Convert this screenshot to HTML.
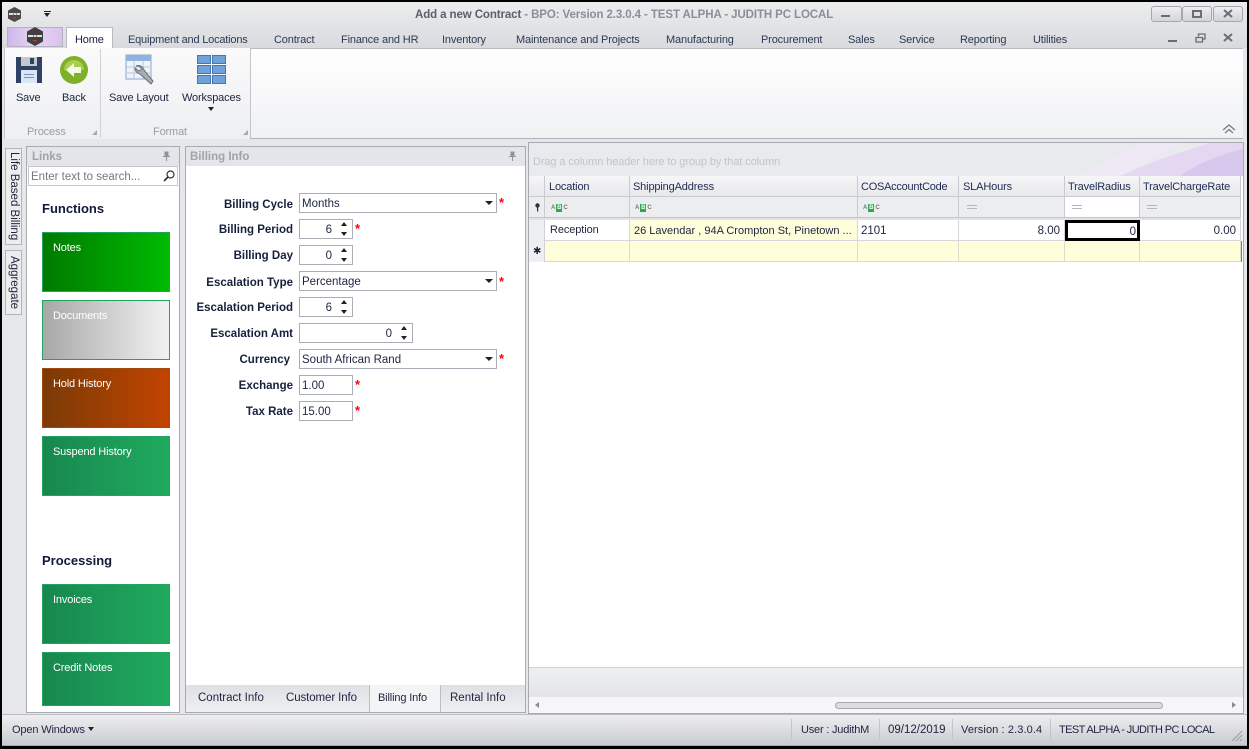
<!DOCTYPE html>
<html><head><meta charset="utf-8"><style>
html,body{margin:0;padding:0}
body{width:1249px;height:749px;overflow:hidden;position:relative;background:#e6e7ea;font-family:"Liberation Sans",sans-serif;font-size:11px;letter-spacing:-.15px;color:#1e2440}
.a,.t{position:absolute}
.t{white-space:nowrap;line-height:14px;margin-top:1px}
.tab{top:32px;color:#2b3a55}
.n{font-size:11.5px;letter-spacing:0}
.gb{position:absolute;left:42px;width:128px;height:60px;box-sizing:border-box;border:1px solid #23a35f;background:linear-gradient(90deg,#17874f,#1fab5e) border-box}
.gb span{position:absolute;left:10px;top:8px;color:#fff;line-height:14px}
.lb{position:absolute;left:186px;width:107px;margin-top:1px;text-align:right;font-weight:bold;font-size:11.5px;letter-spacing:0;color:#16203c;line-height:14px;white-space:nowrap}
.inp{position:absolute;left:299px;box-sizing:border-box;height:20px;border:1px solid #a9adb5;background:#fff;line-height:20px;padding-left:2px;color:#1e2440;font-size:11.5px;letter-spacing:0}
.req{position:absolute;color:#f00;font-weight:bold;font-size:13px;line-height:14px}
.up{position:absolute;width:0;height:0;border-left:3.5px solid transparent;border-right:3.5px solid transparent;border-bottom:4px solid #222}
.dn{position:absolute;width:0;height:0;border-left:3.5px solid transparent;border-right:3.5px solid transparent;border-top:4px solid #222}
.hc{position:absolute;top:176px;height:20px;box-sizing:border-box;border-right:1px solid #c9cbd0;background:linear-gradient(#f6f6f8,#e7e8eb);line-height:23px;padding-left:3px;color:#1e2a50}
.fc{position:absolute;top:197px;height:20px;box-sizing:border-box;border-right:1px solid #c9cbd0;background:#ecedef}
.dc{position:absolute;top:220px;height:21px;box-sizing:border-box;border-right:1px solid #d6d7da;border-bottom:1px solid #d6d7da;background:#fff;line-height:23px;padding:0 3px;white-space:nowrap;overflow:hidden;font-size:11.5px;letter-spacing:0}
.nc{position:absolute;top:241px;height:21px;box-sizing:border-box;border-right:1px solid #dcdcc8;border-bottom:1px solid #d6d7da;background:#fefeda}
.abc{position:absolute;top:204px;width:18px;height:8px;font-size:6px;line-height:8px;color:#777;letter-spacing:0;font-weight:bold;white-space:nowrap}
.abc b{display:inline-block;width:6px;margin:0 1px;text-align:center;background:#2fa84f;color:#fff}
.eq{position:absolute;top:205px;width:10px;height:2px;border-top:1px solid #b4b6bb;border-bottom:1px solid #b4b6bb}
.sep{position:absolute;top:719px;width:1px;height:21px;background:#c2c4c9}
</style></head><body>
<!-- outer frame -->
<div class="a" style="left:0;top:0;width:1249px;height:2px;background:#000"></div>
<div class="a" style="left:0;top:0;width:2px;height:749px;background:#000"></div>
<div class="a" style="left:1247px;top:0;width:2px;height:749px;background:#000"></div>
<div class="a" style="left:0;top:746px;width:1249px;height:3px;background:#000"></div>
<!-- title bar -->
<div class="a" style="left:2px;top:2px;width:1245px;height:46px;background:linear-gradient(#eceded,#d9dade)"></div>
<svg class="a" style="left:6px;top:6px" width="17" height="17" viewBox="0 0 17 17"><path d="M8.500 1L15 4.500V12.500L8.500 16L2 12.500V4.500Z" fill="#4a4a4a"/><path d="M3 7H7V9H3ZM7.500 7H10V9H7.500ZM10.500 7H14V9H10.500Z" fill="#ddd"/><rect x="7" y="11" width="3" height="1.500" fill="#b33"/></svg>
<div class="a" style="left:44px;top:11px;width:7px;height:1px;background:#222"></div>
<div class="a" style="left:44px;top:13px;width:0;height:0;border-left:3.500px solid transparent;border-right:3.500px solid transparent;border-top:4px solid #222"></div>
<div class="t" style="left:415px;top:7px;font-weight:bold;font-size:11.5px;letter-spacing:-.1px;color:#5a5f68">Add a new Contract <span style="color:#8a8e96;font-weight:bold">- BPO: Version 2.3.0.4 - TEST ALPHA - JUDITH PC LOCAL</span></div>
<!-- window buttons -->
<div class="a" style="left:1151px;top:6px;width:29px;height:14px;border:1px solid #a5a7ad;border-radius:3px;background:linear-gradient(#eeeff1,#d3d4d8)"></div>
<div class="a" style="left:1161px;top:15px;width:9px;height:2px;background:#6b6d73"></div>
<div class="a" style="left:1182px;top:6px;width:28px;height:14px;border:1px solid #a5a7ad;border-radius:3px;background:linear-gradient(#eeeff1,#d3d4d8)"></div>
<div class="a" style="left:1192px;top:10px;width:6px;height:4px;border:2px solid #6b6d73"></div>
<div class="a" style="left:1213px;top:6px;width:28px;height:14px;border:1px solid #a5a7ad;border-radius:3px;background:linear-gradient(#eeeff1,#d3d4d8)"></div>
<svg class="a" style="left:1223px;top:9px" width="10" height="9" viewBox="0 0 10 9"><path d="M1 1L9 8M9 1L1 8" stroke="#6b6d73" stroke-width="2"/></svg>
<!-- app button & tabs -->
<div class="a" style="left:7px;top:27px;width:54px;height:18px;border:1px solid #b3b3bd;background:linear-gradient(90deg,#cdb8ea,#e8d4f2 50%,#d8c2ee)"></div>
<svg class="a" style="left:26px;top:27px" width="18" height="20" viewBox="0 0 18 20"><path d="M9 0L17 4.500V14.500L9 19L1 14.500V4.500Z" fill="#404040"/><path d="M2 8H7V10H2ZM7.500 8H10.500V10H7.500ZM11 8H16V10H11Z" fill="#ddd"/><rect x="7" y="13" width="4" height="1.500" fill="#b33"/></svg>
<div class="a" style="left:66px;top:27px;width:47px;height:22px;box-sizing:border-box;border:1px solid #b8bac0;border-bottom:0;background:#fff"></div>
<div class="t" style="left:75px;top:32px;color:#1a2040">Home</div>
<div class="t tab" style="left:128px;letter-spacing:-.2px">Equipment and Locations</div>
<div class="t tab" style="left:274px">Contract</div>
<div class="t tab" style="left:341px">Finance and HR</div>
<div class="t tab" style="left:442px">Inventory</div>
<div class="t tab" style="left:516px">Maintenance and Projects</div>
<div class="t tab" style="left:666px">Manufacturing</div>
<div class="t tab" style="left:761px">Procurement</div>
<div class="t tab" style="left:848px">Sales</div>
<div class="t tab" style="left:899px">Service</div>
<div class="t tab" style="left:960px">Reporting</div>
<div class="t tab" style="left:1033px">Utilities</div>
<div class="a" style="left:1168px;top:40px;width:9px;height:2px;background:#6b6d73"></div>
<svg class="a" style="left:1195px;top:33px" width="11" height="10" viewBox="0 0 11 10"><path d="M3.500 3.500V1H10V6H7M1 4.500H7.500V9H1Z" fill="none" stroke="#6b6d73" stroke-width="1.300"/></svg>
<svg class="a" style="left:1223px;top:33px" width="10" height="9" viewBox="0 0 10 9"><path d="M1 1L9 8M9 1L1 8" stroke="#6b6d73" stroke-width="2"/></svg>
<!-- ribbon -->
<div class="a" style="left:5px;top:48px;width:1238px;height:91px;box-sizing:border-box;border-top:1px solid #b8bac0;border-bottom:1px solid #b0b2b8;background:linear-gradient(#fff,#f0f1f3)"></div>
<div class="a" style="left:4px;top:48px;width:247px;height:91px;box-sizing:border-box;border-left:1px solid #c3c5ca;border-right:1px solid #c3c5ca;background:linear-gradient(#fafafb,#eeeff1)"></div>
<div class="a" style="left:100px;top:49px;width:1px;height:89px;background:#cfd1d5"></div>
<svg class="a" style="left:16px;top:56px" width="26" height="28" viewBox="0 0 26 28"><path d="M0 1H26V27H0Z" fill="#2f4266"/><rect x="5" y="1" width="16" height="9" fill="#c4c8cf"/><rect x="14" y="2" width="4" height="6" fill="#2f4266"/><rect x="5" y="14" width="16" height="13" fill="#dbe6f4"/><rect x="8" y="18" width="10" height="1" fill="#6d93c4"/><rect x="8" y="21" width="10" height="1" fill="#6d93c4"/></svg>
<svg class="a" style="left:60px;top:56px" width="28" height="28" viewBox="0 0 28 28"><circle cx="14" cy="14" r="14" fill="#7fb02a"/><path d="M4 14A10 10 0 0 1 24 14Z" fill="#a8cf4c"/><path d="M6 14L14 7V11H21V17H14V21Z" fill="#f7f9e8"/></svg>
<div class="t" style="left:16px;top:90px">Save</div>
<div class="t" style="left:62px;top:90px">Back</div>
<div class="t" style="left:27px;top:124px;color:#9a9da5">Process</div>
<div class="a" style="left:92px;top:130px;width:0;height:0;border-left:5px solid transparent;border-bottom:5px solid #a8aab0"></div>
<svg class="a" style="left:125px;top:54px" width="30" height="32" viewBox="0 0 30 32"><rect x="1" y="1" width="25" height="24" fill="#eef3fa" stroke="#8aa7cc"/><rect x="1" y="1" width="25" height="6" fill="#8fb3de"/><path d="M9 7V25M18 7V25M1 13H26M1 19H26" stroke="#b5c9e3"/><path d="M11 12A6 6 0 0 1 19 16L28 27L26 30L15 20A6 6 0 0 1 10 14L14 17L17 15L14 12Z" fill="#a9acb1" stroke="#6e7176"/></svg>
<svg class="a" style="left:196px;top:54px" width="30" height="30" viewBox="0 0 30 30"><g fill="#6ea2d8" stroke="#3f78b5"><rect x="1.500" y="1.500" width="13" height="8"/><rect x="16.500" y="1.500" width="13" height="8"/><rect x="1.500" y="11.500" width="13" height="8"/><rect x="16.500" y="11.500" width="13" height="8"/><rect x="1.500" y="21.500" width="13" height="8"/><rect x="16.500" y="21.500" width="13" height="8"/></g></svg>
<div class="t" style="left:109px;top:90px">Save Layout</div>
<div class="t" style="left:182px;top:90px">Workspaces</div>
<div class="a" style="left:208px;top:107px;width:0;height:0;border-left:3.500px solid transparent;border-right:3.500px solid transparent;border-top:4px solid #222"></div>
<div class="t" style="left:153px;top:124px;color:#9a9da5">Format</div>
<div class="a" style="left:243px;top:130px;width:0;height:0;border-left:5px solid transparent;border-bottom:5px solid #a8aab0"></div>
<svg class="a" style="left:1222px;top:123px" width="14" height="12" viewBox="0 0 14 12"><path d="M1 7L7 2L13 7M3 10L7 6.500L11 10" fill="none" stroke="#777b82" stroke-width="1.300"/></svg>
<!-- left vertical tabs -->
<div class="a" style="left:5px;top:148px;width:17px;height:97px;box-sizing:border-box;border:1px solid #b2b4ba;background:#eceded"></div>
<div class="a" style="left:5px;top:250px;width:17px;height:65px;box-sizing:border-box;border:1px solid #b2b4ba;background:#eceded"></div>
<div class="t" style="left:7px;top:152px;margin-top:0;writing-mode:vertical-rl;line-height:14px;font-size:11.5px;letter-spacing:0;color:#1e2440">Life Based Billing</div>
<div class="t" style="left:7px;top:256px;margin-top:0;writing-mode:vertical-rl;line-height:14px;font-size:11.5px;letter-spacing:0;color:#1e2440">Aggregate</div>
<!-- links panel -->
<div class="a" style="left:26px;top:146px;width:154px;height:567px;box-sizing:border-box;border:1px solid #a9abb2;background:#fff"></div>
<div class="a" style="left:27px;top:147px;width:152px;height:19px;background:#e4e5e8"></div>
<div class="t" style="left:32px;top:149px;font-weight:bold;font-size:11.5px;letter-spacing:0;color:#9ea2ab">Links</div>
<div class="a" style="left:28px;top:166px;width:150px;height:20px;box-sizing:border-box;border:1px solid #c4c6cb;background:#fff"></div>
<div class="t n" style="left:31px;top:169px;color:#757880">Enter text to search...</div>
<svg class="a" style="left:163px;top:170px" width="12" height="12" viewBox="0 0 12 12"><circle cx="7.500" cy="4.500" r="3.500" fill="none" stroke="#333" stroke-width="1.200"/><path d="M5 7L1 11" stroke="#333" stroke-width="1.600"/></svg>
<svg class="a" style="left:162px;top:151px" width="9" height="10" viewBox="0 0 9 10"><path d="M2.500 0.500H6.500V5H8V6H1V5H2.500ZM4 6H5V10H4Z" fill="#8f9298"/></svg>
<div class="t" style="left:42px;top:201px;font-weight:bold;font-size:13px;letter-spacing:0;color:#121a38">Functions</div>
<div class="gb" style="top:232px;background:linear-gradient(90deg,#007a00,#00bb00) border-box"><span>Notes</span></div>
<div class="gb" style="top:300px;background:linear-gradient(90deg,#a8a8a8,#f2f2f2)"><span>Documents</span></div>
<div class="gb" style="top:368px;border-color:#a04a10;background:linear-gradient(90deg,#7a3a06,#c24400) border-box"><span>Hold History</span></div>
<div class="gb" style="top:436px"><span>Suspend History</span></div>
<div class="t" style="left:42px;top:553px;font-weight:bold;font-size:13px;letter-spacing:0;color:#121a38">Processing</div>
<div class="gb" style="top:584px"><span>Invoices</span></div>
<div class="gb" style="top:652px;height:54px"><span>Credit Notes</span></div>
<!-- billing panel -->
<div class="a" style="left:185px;top:146px;width:341px;height:567px;box-sizing:border-box;border:1px solid #a9abb2;background:#fff"></div>
<div class="a" style="left:186px;top:147px;width:339px;height:19px;background:#e4e5e8"></div>
<div class="t" style="left:190px;top:149px;font-weight:bold;font-size:11.5px;letter-spacing:0;color:#9ea2ab">Billing Info</div>
<svg class="a" style="left:508px;top:151px" width="9" height="10" viewBox="0 0 9 10"><path d="M2.500 0.500H6.500V5H8V6H1V5H2.500ZM4 6H5V10H4Z" fill="#8f9298"/></svg>
<div class="lb" style="top:197px">Billing Cycle</div>
<div class="lb" style="top:222px">Billing Period</div>
<div class="lb" style="top:248px">Billing Day</div>
<div class="lb" style="top:275px">Escalation Type</div>
<div class="lb" style="top:300px">Escalation Period</div>
<div class="lb" style="top:326px">Escalation Amt</div>
<div class="lb" style="top:352px;left:183px">Currency</div>
<div class="lb" style="top:378px">Exchange</div>
<div class="lb" style="top:404px">Tax Rate</div>
<div class="inp" style="top:193px;width:198px">Months</div>
<div class="a" style="left:485px;top:201px;width:0;height:0;border-left:4px solid transparent;border-right:4px solid transparent;border-top:4px solid #222"></div>
<div class="req" style="left:499px;top:196px">*</div>
<div class="inp" style="top:219px;width:54px;text-align:right;padding-right:20px">6</div>
<div class="up" style="left:341px;top:222px"></div><div class="dn" style="left:341px;top:232px"></div>
<div class="req" style="left:355px;top:222px">*</div>
<div class="inp" style="top:245px;width:54px;text-align:right;padding-right:20px">0</div>
<div class="up" style="left:341px;top:248px"></div><div class="dn" style="left:341px;top:258px"></div>
<div class="inp" style="top:271px;width:198px">Percentage</div>
<div class="a" style="left:485px;top:279px;width:0;height:0;border-left:4px solid transparent;border-right:4px solid transparent;border-top:4px solid #222"></div>
<div class="req" style="left:499px;top:275px">*</div>
<div class="inp" style="top:297px;width:54px;text-align:right;padding-right:20px">6</div>
<div class="up" style="left:341px;top:300px"></div><div class="dn" style="left:341px;top:310px"></div>
<div class="inp" style="top:323px;width:114px;text-align:right;padding-right:20px">0</div>
<div class="up" style="left:401px;top:326px"></div><div class="dn" style="left:401px;top:336px"></div>
<div class="inp" style="top:349px;width:198px">South African Rand</div>
<div class="a" style="left:485px;top:357px;width:0;height:0;border-left:4px solid transparent;border-right:4px solid transparent;border-top:4px solid #222"></div>
<div class="req" style="left:499px;top:352px">*</div>
<div class="inp" style="top:375px;width:54px">1.00</div>
<div class="req" style="left:355px;top:378px">*</div>
<div class="inp" style="top:401px;width:54px">15.00</div>
<div class="req" style="left:355px;top:404px">*</div>
<!-- bottom tabs -->
<div class="a" style="left:186px;top:685px;width:339px;height:27px;background:linear-gradient(#dfe0e4,#eeeff1)"></div>
<div class="a" style="left:369px;top:685px;width:72px;height:27px;box-sizing:border-box;border-left:1px solid #bcbec3;border-right:1px solid #bcbec3;background:#f3f4f6"></div>
<div class="t n" style="left:198px;top:690px">Contract Info</div>
<div class="t n" style="left:286px;top:690px;letter-spacing:-.1px">Customer Info</div>
<div class="t" style="left:378px;top:690px">Billing Info</div>
<div class="t n" style="left:450px;top:690px">Rental Info</div>
<!-- grid panel -->
<div class="a" style="left:528px;top:142px;width:716px;height:572px;box-sizing:border-box;border:1px solid #a9abb2;background:#fff"></div>
<div class="a" style="left:529px;top:143px;width:714px;height:33px;background:#e9eaed"></div>
<svg class="a" style="left:1060px;top:143px" width="183" height="33" viewBox="0 0 183 33"><path d="M20 33L80 0H120L60 33Z" fill="#efe9f5"/><path d="M60 33Q100 15 150 0H183V33Z" fill="#e3d7f2"/><path d="M120 33Q145 15 183 6V33Z" fill="#d8c8ee"/></svg>
<div class="t" style="left:533px;top:154px;color:#c2c4c9;letter-spacing:-.1px">Drag a column header here to group by that column</div>
<div class="a" style="left:529px;top:176px;width:712px;height:1px;background:#c9cbd0"></div>
<div class="hc" style="left:529px;width:16px"></div>
<div class="hc" style="left:545px;width:85px;padding-left:4px">Location</div>
<div class="hc" style="left:630px;width:228px">ShippingAddress</div>
<div class="hc" style="left:858px;width:101px;letter-spacing:-.25px">COSAccountCode</div>
<div class="hc" style="left:959px;width:106px;padding-left:4px">SLAHours</div>
<div class="hc" style="left:1065px;width:75px">TravelRadius</div>
<div class="hc" style="left:1140px;width:101px">TravelChargeRate</div>
<div class="a" style="left:529px;top:196px;width:712px;height:1px;background:#c9cbd0"></div>
<div class="fc" style="left:529px;width:16px"></div>
<div class="fc" style="left:545px;width:85px"></div>
<div class="fc" style="left:630px;width:228px"></div>
<div class="fc" style="left:858px;width:101px"></div>
<div class="fc" style="left:959px;width:106px"></div>
<div class="fc" style="left:1065px;width:75px;background:#fff"></div>
<div class="fc" style="left:1140px;width:101px"></div>
<svg class="a" style="left:534px;top:203px" width="7" height="9" viewBox="0 0 7 9"><circle cx="3.500" cy="2.500" r="2.200" fill="#333"/><rect x="3" y="4" width="1.200" height="4.500" fill="#333"/></svg>
<div class="abc" style="left:551px">A<b>B</b>C</div>
<div class="abc" style="left:635px">A<b>B</b>C</div>
<div class="abc" style="left:863px">A<b>B</b>C</div>
<div class="eq" style="left:967px"></div>
<div class="eq" style="left:1072px"></div>
<div class="eq" style="left:1147px"></div>
<div class="a" style="left:529px;top:217px;width:712px;height:3px;background:#e2e3e6;border-top:1px solid #c4c6cb;box-sizing:border-box"></div>
<div class="a" style="left:529px;top:220px;width:16px;height:42px;background:#eeeff1;border-right:1px solid #d0d2d6;box-sizing:border-box"></div>
<div class="dc" style="left:545px;width:85px;line-height:20px;padding-left:5px;font-size:11px;letter-spacing:-.1px">Reception</div>
<div class="dc" style="left:630px;width:228px;background:#fefeda;font-size:11px;letter-spacing:0;padding-left:4px">26 Lavendar , 94A Crompton St, Pinetown ...</div>
<div class="dc" style="left:858px;width:101px">2101</div>
<div class="dc" style="left:959px;width:106px;text-align:right;padding-right:4px">8.00</div>
<div class="dc" style="left:1140px;width:101px;text-align:right;padding-right:4px">0.00</div>
<div class="a n" style="left:1065px;top:220px;width:75px;height:21px;box-sizing:border-box;border:3px solid #000;background:#fff;text-align:right;padding-right:1px;line-height:18px">0</div>
<div class="nc" style="left:545px;width:85px"></div>
<div class="nc" style="left:630px;width:228px"></div>
<div class="nc" style="left:858px;width:101px"></div>
<div class="nc" style="left:959px;width:106px"></div>
<div class="nc" style="left:1065px;width:75px"></div>
<div class="nc" style="left:1140px;width:101px"></div>
<div class="t" style="left:533px;top:246px;margin-top:0;font-size:10px;line-height:12px">✱</div>
<div class="a" style="left:1241px;top:241px;width:1px;height:21px;background:#3a9a8a"></div>
<div class="a" style="left:529px;top:667px;width:714px;height:30px;box-sizing:border-box;border-top:1px solid #cfd1d5;background:linear-gradient(#eeeff1,#e4e5e8)"></div>
<div class="a" style="left:529px;top:697px;width:714px;height:16px;background:#f6f6f8"></div>
<div class="a" style="left:835px;top:702px;width:326px;height:5px;border:1px solid #a7a9ae;border-radius:4px;background:#dcdde0"></div>
<div class="a" style="left:535px;top:702px;width:0;height:0;border-top:3px solid transparent;border-bottom:3px solid transparent;border-right:4px solid #8a8c92"></div>
<div class="a" style="left:1232px;top:702px;width:0;height:0;border-top:3px solid transparent;border-bottom:3px solid transparent;border-left:4px solid #8a8c92"></div>
<!-- status bar -->
<div class="a" style="left:2px;top:714px;width:1245px;height:32px;box-sizing:border-box;border-top:1px solid #b9bbc0;border-bottom:1px solid #a9abb0;background:linear-gradient(#eeeef0,#c9cbd0)"></div>
<div class="t" style="left:12px;top:722px">Open Windows</div>
<div class="a" style="left:88px;top:727px;width:0;height:0;border-left:3.500px solid transparent;border-right:3.500px solid transparent;border-top:4px solid #222"></div>
<div class="sep" style="left:791px"></div><div class="t" style="left:801px;top:722px;letter-spacing:-.2px">User : JudithM</div>
<div class="sep" style="left:879px"></div><div class="t n" style="left:888px;top:722px">09/12/2019</div>
<div class="sep" style="left:952px"></div><div class="t" style="left:961px;top:722px;letter-spacing:.1px">Version : 2.3.0.4</div>
<div class="sep" style="left:1050px"></div><div class="t" style="left:1059px;top:722px;letter-spacing:-.6px">TEST ALPHA - JUDITH PC LOCAL</div>
<svg class="a" style="left:1231px;top:730px" width="12" height="12" viewBox="0 0 12 12"><path d="M11 1L1 11M11 5L5 11M11 9L9 11" stroke="#9a9ca2"/></svg>
</body></html>
